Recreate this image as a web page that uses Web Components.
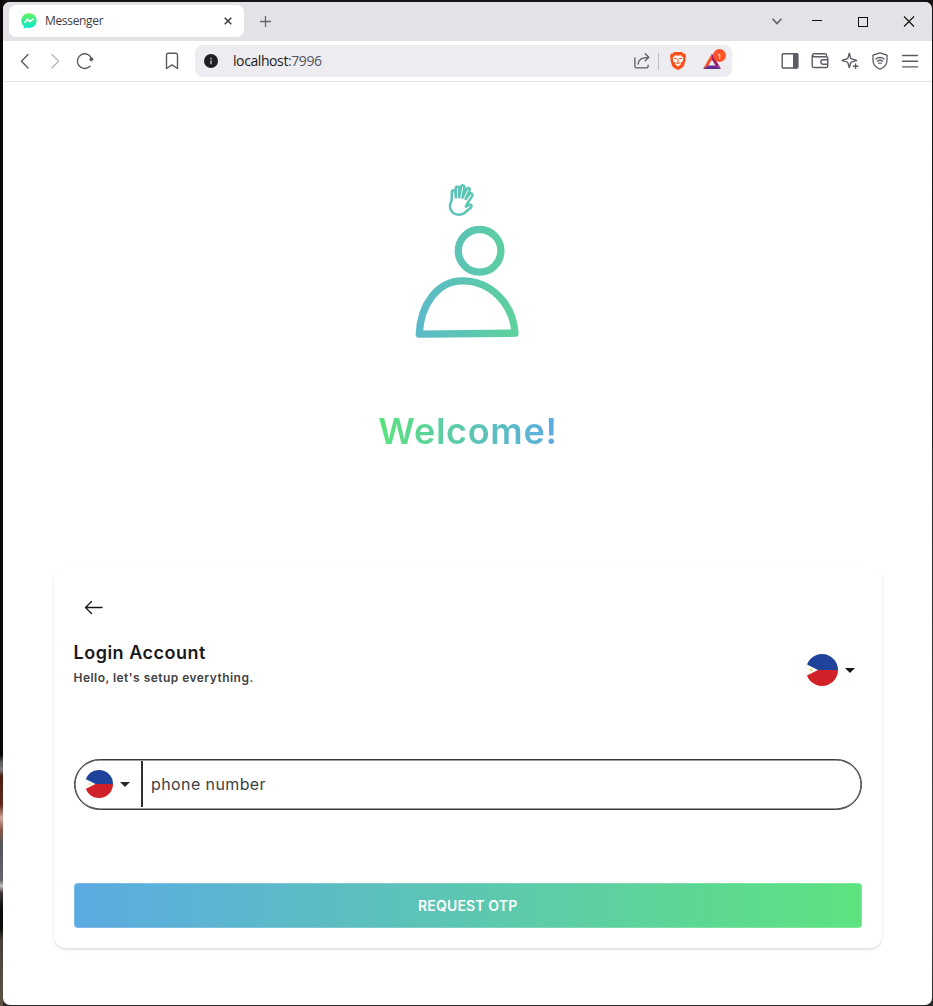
<!DOCTYPE html>
<html lang="en">
<head>
<meta charset="utf-8">
<title>Messenger</title>
<style>
html,body{margin:0;height:100%;overflow:hidden;background:#111}
</style>
</head>
<body>
<browser-window>
  <tab-strip slot="chrome">Messenger</tab-strip>
  <tool-bar slot="chrome"></tool-bar>
  <welcome-hero>Welcome!</welcome-hero>
  <login-card></login-card>
</browser-window>
<script>
function define(name, html) {
  const t = document.createElement('template');
  t.innerHTML = html;
  customElements.define(name, class extends HTMLElement {
    constructor() {
      super();
      this.attachShadow({mode: 'open'}).appendChild(t.content.cloneNode(true));
    }
  });
}

define('browser-window', `
<style>
:host{display:block;box-sizing:border-box;width:933px;height:1006px;padding:2px 1px 1px 3px;
background:linear-gradient(#0b0708 0 755px,#5a5a5e 762px,#807a7c 770px,#4a1c12 776px,#642a1c 805px,#d3a9a0 818px,#8a5548 830px,#55555d 845px,#62636d 880px,#c9c0c4 886px,#3a3438 893px,#0d0a0a 910px,#0d0a0a 928px,#4a4038 940px,#5b5145 1000px) 0 0/3px 100% no-repeat,linear-gradient(#171314,#222 40%,#444 90%,#2a2829)}
.win{display:flex;flex-direction:column;height:100%;background:#fff;border-radius:7px;overflow:hidden}
</style>
<div class="win"><slot name="chrome"></slot><slot></slot></div>`);

define('icon-box', `
<style>
:host{display:flex;width:30px;height:30px;align-items:center;justify-content:center;flex:none}
</style><slot></slot>`);

define('tab-strip', `
<style>
:host{display:flex;align-items:center;height:39px;box-sizing:border-box;background:#e3e2e7;padding-left:6px;flex:none;font:12px/16px "Open Sans","Noto Sans",sans-serif;color:#3c3c42}
.tab{display:flex;align-items:center;width:235px;height:32px;background:#fff;border-radius:7px;box-sizing:border-box;padding:0 1px 0 12px;margin-top:-1px}
.name{flex:1;margin-left:8px;letter-spacing:-.33px}
svg{display:block}
.sp{flex:1}
icon-box.w{width:46px}
icon-box.c{width:34px}
</style>
<div class="tab">
<svg width="16" height="16" viewBox="0 0 16 16"><defs><linearGradient id="g" x1="0" y1="0" x2="0" y2="1"><stop stop-color="#62f35c"/><stop offset="1" stop-color="#05e8d5"/></linearGradient></defs><path d="M8 .2C3.500.2.3 3.500.3 7.500c0 2.300 1 4.300 2.500 5.600v2.700l2.400-1.300c.9.3 1.800.4 2.800.4 4.500 0 7.700-3.300 7.700-7.400S12.500.2 8 .2z" fill="url(#g)"/><path d="M3.600 9.700 6.300 6.500 9 8.500 12.400 5.900" fill="none" stroke="#fff" stroke-width="1.700"/></svg>
<span class="name"><slot></slot></span>
<icon-box><svg width="8" height="8" viewBox="0 0 8 8" stroke="#3b3b43" stroke-width="1.500"><path d="M.7.7l6.600 6.600M7.300.7L.7 7.300"/></svg></icon-box>
</div>
<icon-box style="margin:-1px 0 0 6px"><svg width="11" height="11" stroke="#66676d" stroke-width="1.300"><path d="M5.500 0v11M0 5.500h11"/></svg></icon-box>
<span class="sp"></span>
<icon-box class="c"><svg width="12" height="12" fill="none" stroke="#5f6068" stroke-width="1.600"><path d="M1.500 2.800 6 7.500l4.500-4.700"/></svg></icon-box>
<icon-box class="w"><svg width="10" height="10" fill="#111"><path d="M0 3h10v1H0z"/></svg></icon-box>
<icon-box class="w"><svg width="10" height="10" fill="none" stroke="#111"><rect x=".5" y=".5" width="9" height="9"/></svg></icon-box>
<icon-box class="w"><svg width="12" height="12" fill="none" stroke="#111" stroke-width="1.100"><path d="M1 .5l10 10M11 .5L1 10.500"/></svg></icon-box>`);

define('tool-bar', `
<style>
:host{display:flex;align-items:center;height:41px;box-sizing:border-box;border-bottom:1px solid #e4e4e7;flex:none;padding:0 7px}
svg{display:block;fill:none;stroke:#5b5c64;stroke-width:1.400;stroke-linecap:round;stroke-linejoin:round}
.url{display:flex;align-items:center;width:537px;height:32px;margin:0 43px 0 8px;background:#edecf1;border-radius:8px;font:14px/20px "Open Sans","Noto Sans",sans-serif;color:#1b1b22}
.addr{flex:1;margin-left:7px;letter-spacing:-.41px}
.addr i{font-style:normal;color:#55565e}
.sep{width:1px;height:17px;background:#bdbdc4;margin-left:1px}
.info{display:grid;place-items:center;width:14px;height:14px;border-radius:50%;background:#1e1e25;margin-left:9px;margin-right:8px}
.bat{position:relative}
.badge{position:absolute;left:16px;top:3px;width:13px;height:13px;border-radius:50%;background:#ff5429;color:#fff;font:8px/13px "Open Sans",sans-serif;text-align:center}
</style>
<icon-box><svg width="18" height="18"><path d="M12 2.500 5.500 9.200l6.500 6.700"/></svg></icon-box>
<icon-box><svg width="18" height="18" style="stroke:#b9babf"><path d="M6 2.500l6.500 6.700L6 15.900"/></svg></icon-box>
<icon-box><svg width="18" height="18"><path d="M14 14.200A7.300 7.300 0 1 1 15.700 7"/><circle cx="15.300" cy="7.300" r="1.500" fill="#5b5c64" stroke-width="1"/></svg></icon-box>
<icon-box style="margin-left:57px"><svg width="14" height="18"><path d="M1.500 3q0-1.700 1.700-1.700h7.600q1.700 0 1.700 1.700v13.500L7 12.900l-5.500 3.600z"/></svg></icon-box>
<div class="url">
<span class="info"><svg width="6" height="8" style="stroke:#dddde2;stroke-width:1.200;stroke-linecap:butt"><path d="M3 .8v1.400M3 3.300v4"/></svg></span>
<span class="addr">localhost<i>:7996</i></span>
<icon-box><svg width="18" height="18" style="stroke-width:1.300"><path d="M1.900 6v8.300q0 1.600 1.600 1.600h10q1.600 0 1.600-1.600v-1.200M5 12.200C5.500 7.500 8.800 5.200 15.500 5.300M12.200 1.800l3.600 3.500-3.600 3.500"/></svg></icon-box>
<span class="sep"></span>
<icon-box style="margin-left:4px"><svg width="18" height="18" style="stroke:none"><path d="M5 0h8l1.500 1.700 1.500-.1 1 2.700-.6 1.700.3 1.500-1.800 6.500-2.200 2L9 18l-3.700-2-2.200-2-1.800-6.500.3-1.500L1 4.300l1-2.700 1.500.1z" fill="#fb4f17"/><path d="M6 3.200l3 .6 3-.6 2.300 2.800-.5 3-2.300 2 .4 1.200L9 14.500l-2.900-2.300.4-1.200-2.300-2-.5-3z" fill="#fff"/><path d="M5.300 6.300l2.400.5M12.700 6.300l-2.400.5M9 7.300v3M7.300 10.700 9 11.600l1.700-.9" style="stroke:#fb4f17;stroke-width:1"/></svg></icon-box>
<icon-box class="bat" style="margin:0 5px 0 4px"><svg width="18" height="16" style="stroke:none"><path d="M9 .5 0 16 5.400 12.500 9 6.700z" fill="#ff4c24"/><path d="M9 .5v6.200l3.600 5.800L18 16z" fill="#9e1f63"/><path d="M0 16h18l-5.400-3.500H5.400z" fill="#662d91"/></svg><span class="badge">1</span></icon-box>
</div>
<icon-box><svg width="18" height="18"><rect x="1.200" y="1.700" width="15.600" height="14.300" rx="1"/><path d="M12.700 2h3.800v13.700h-3.800z" fill="#5b5c64"/></svg></icon-box>
<icon-box><svg width="18" height="18"><path d="M15.500 4.500V3.300q0-1.500-1.500-1.500H2.800a1.500 1.500 0 0 0 0 2.900h12.400q1.600 0 1.600 1.600v7.600q0 1.600-1.600 1.600H2.900q-1.700 0-1.700-1.600V3.500M16.800 7.800h-4.800a2.200 2.200 0 0 0 0 4.400h4.800"/></svg></icon-box>
<icon-box><svg width="18" height="18" style="stroke-width:1.400"><path d="M8.300 1.200C8.800 1.200 9 5.400 10 6.400s5.700 1.500 5.700 2-4.700 1-5.700 2-1.200 5.300-1.700 5.300-.7-4.300-1.700-5.300-5.700-1.500-5.700-2 4.700-1 5.700-2 1.200-5.200 1.700-5.200zM14.600 12v4.600M12.300 14.300h4.600"/></svg></icon-box>
<icon-box><svg width="18" height="18" style="stroke-width:1.300"><path d="M9 .8 16 3.200v5c0 4.500-3.200 7.500-7 9-3.800-1.500-7-4.500-7-9v-5z"/><path d="M4.800 7q4.200-3 8.400 0M6.300 9.200q2.700-1.900 5.400 0M7.800 11.300q1.200-.8 2.400 0"/></svg></icon-box>
<icon-box><svg width="18" height="16"><path d="M1.500 2.500h15M1.500 8.200h15M1.500 13.900h15"/></svg></icon-box>`);

define('welcome-hero', `
<style>
:host{display:flex;flex-direction:column;align-items:center;height:486px;flex:none;padding-top:98px;box-sizing:border-box}
svg{display:block;margin-right:2px}
h1{margin:67px 0 0 1px;font:600 36px/44px Inter,sans-serif;letter-spacing:.700px;background:linear-gradient(90deg,#5be37d,#5dabe3);-webkit-background-clip:text;background-clip:text;color:transparent}
</style>
<svg width="110" height="162" viewBox="412 180 110 162" fill="none" stroke="url(#p)" stroke-linejoin="round" stroke-linecap="round">
<defs><linearGradient id="p" gradientUnits="userSpaceOnUse" x1="416" y1="0" x2="518" y2="0"><stop stop-color="#5bb9ca"/><stop offset="1" stop-color="#5dd29b"/></linearGradient></defs>
<circle cx="479.600" cy="250.800" r="21.300" stroke-width="7.300"/>
<path d="M419.300 334.200C420.500 304 438 281 462 280.800 490 280.500 513 303 515 333.200z" stroke-width="7.300"/>
<path d="M451.700 199.500l.1-7.800c.3-2.200 2.900-2 3.400.2l.8 5.600-.2-9.300c.3-2.200 3-2.200 3.500 0l-.1 9 1.800-10.400c.4-2.200 3.100-2 3.400.2l-1.900 10.700 4.200-8.700c1-1.900 3.300-1 3.100 1l-4.200 9 3.800-5c1.300-1.600 3.500-.4 3 1.600l-5.300 8.200c-.8 1.500-1.200 2.300-1.200 3l2.900-1.900c1.700-1 3.400.6 2.500 2.300l-6 5.100c-2 2-4 2.400-6.700 2.400-4.700 0-8.600-3.400-8.600-8.500 0-2.900 1.600-4.800 1.700-6.700z" stroke-width="2.500"/>
</svg>
<h1><slot></slot></h1>`);

define('country-flag', `
<style>
:host{display:inline-flex;align-items:center;flex:none;width:var(--size,32px);height:var(--size,32px)}
svg{display:block;width:100%;height:100%}
</style>
<svg viewBox="0 0 32 32"><defs><clipPath id="c"><circle cx="16" cy="16" r="16"/></clipPath></defs><g clip-path="url(#c)"><path d="M0 0h32v16H0z" fill="#1f429b"/><path d="M0 16h32v16H0z" fill="#d02028"/><path d="M-1 9.500 12 16-1 22.500z" fill="#fff"/><path d="M0 9.500h1.200v13H0z" fill="#fff"/><circle cx="5.300" cy="16" r="1.200" fill="#f5d13c"/></g></svg>`);

define('flag-picker', `
<style>
:host{display:flex;align-items:center;gap:7px}
i{width:0;height:0;border:5px solid transparent;border-top-color:currentColor;border-bottom:0}
</style>
<country-flag></country-flag><i></i>`);

define('phone-field', `
<style>
:host{display:flex;align-items:center;box-sizing:border-box;height:51px;border:1px solid #3a3a3c;box-shadow:inset 0 0 0 .6px #3a3a3c;border-radius:26px;padding-bottom:1px;color:#29292b;font:16px/24px Inter,sans-serif}
flag-picker{--size:28px;margin-left:10.500px;width:56px;box-sizing:border-box}
.bar{width:1.500px;height:46px;background:#303032}
.text{padding-left:8.500px;letter-spacing:.4px;color:#414143}
</style>
<flag-picker></flag-picker><span class="bar"></span><span class="text"><slot></slot></span>`);

define('gradient-button', `
<style>
:host{display:block;height:45px;border-radius:4px;background:linear-gradient(90deg,#5caae3,#5de37f);box-shadow:inset 0 0 0 1px rgba(255,255,255,.2);color:#fff;font:600 14px/46px Inter,sans-serif;text-align:center;letter-spacing:.15px}
</style><slot></slot>`);

define('login-card', `
<style>
:host{display:flex;flex-direction:column;box-sizing:border-box;width:827.500px;height:379.500px;margin-left:51px;padding:24px 19.500px 20px 19.500px;border-radius:12px;background:#fff;box-shadow:0 2px 3px rgba(0,0,0,.1),0 1px 2px rgba(0,0,0,.05);font-family:Inter,sans-serif;flex:none}
.back{display:block;margin:5px 0 0 10.500px;flex:none}
.row{display:flex;justify-content:space-between;margin-top:20px;height:64px}
h2{margin:2px 0 0;font:600 18px/28px Inter,sans-serif;letter-spacing:.500px;color:#18181a}
p{margin:2px 0 0;font:600 12px/18px Inter,sans-serif;letter-spacing:.46px;color:#424244}
.row flag-picker{margin:15px 7px 0 0;height:36px;color:#171717}
phone-field{margin-top:58px;flex:none}
gradient-button{margin-top:auto}
</style>
<svg class="back" width="20" height="20" fill="none" stroke="#171719" stroke-width="1.300" stroke-linecap="round" stroke-linejoin="round"><path d="M18 10.500H1.500M7.500 4.500l-6 6 6 6"/></svg>
<div class="row"><div><h2>Login Account</h2><p>Hello, let's setup everything.</p></div><flag-picker></flag-picker></div>
<phone-field>phone number</phone-field>
<gradient-button>REQUEST OTP</gradient-button>`);
</script>
</body>
</html>
